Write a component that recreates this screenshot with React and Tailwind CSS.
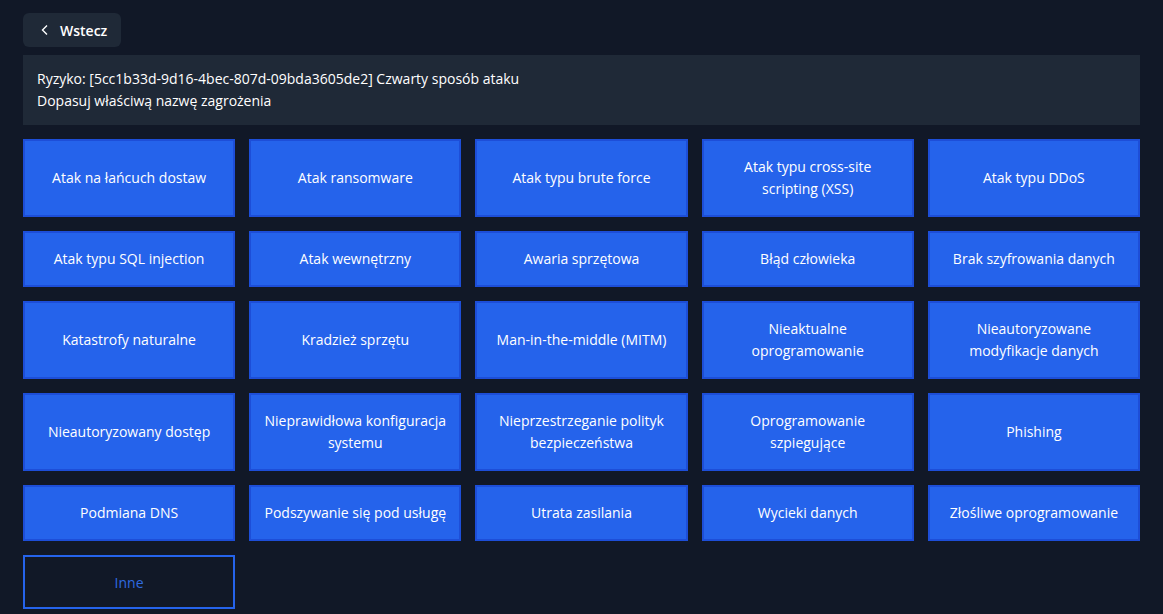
import React from "react";

const items = [
  "Atak na łańcuch dostaw","Atak ransomware","Atak typu brute force","Atak typu cross-site scripting (XSS)","Atak typu DDoS",
  "Atak typu SQL injection","Atak wewnętrzny","Awaria sprzętowa","Błąd człowieka","Brak szyfrowania danych",
  "Katastrofy naturalne","Kradzież sprzętu","Man-in-the-middle (MITM)","Nieaktualne oprogramowanie","Nieautoryzowane modyfikacje danych",
  "Nieautoryzowany dostęp","Nieprawidłowa konfiguracja systemu","Nieprzestrzeganie polityk bezpieczeństwa","Oprogramowanie szpiegujące","Phishing",
  "Podmiana DNS","Podszywanie się pod usługę","Utrata zasilania","Wycieki danych","Złośliwe oprogramowanie",
];

export default function App() {
  return (
    <div className="min-h-[614px] bg-[#111827] px-[23px] pt-[13px] pb-6 text-[14px] text-white" style={{ fontFamily: '"Open Sans", sans-serif' }}>
      <button className="flex h-[34px] items-center gap-[9px] rounded-md bg-[#1f2937] pl-[16px] pr-[14px] text-[14px] font-semibold text-white">
        <svg width="12" height="12" viewBox="0 0 12 12" fill="none" stroke="currentColor" strokeWidth="1.4"><path d="M8 1.5 3.5 6 8 10.5" /></svg>
        Wstecz
      </button>
      <div className="mt-[8px] bg-[#1f2937] px-[14px] py-[13px] leading-[22px]">
        <div>Ryzyko: [5cc1b33d-9d16-4bec-807d-09bda3605de2] Czwarty sposób ataku</div>
        <div>Dopasuj właściwą nazwę zagrożenia</div>
      </div>
      <div className="mt-[14px] grid grid-cols-5 gap-[14px]">
        {items.map((t) => (
          <button key={t} className="flex items-center justify-center border-2 border-[#1d4ed8] bg-[#2563eb] px-3 py-[15px] text-center leading-[22px] text-white">
            {t}
          </button>
        ))}
        <button className="flex h-[54px] items-center justify-center border-2 border-[#2563eb] bg-transparent text-[#2f6be0]">Inne</button>
      </div>
    </div>
  );
}
